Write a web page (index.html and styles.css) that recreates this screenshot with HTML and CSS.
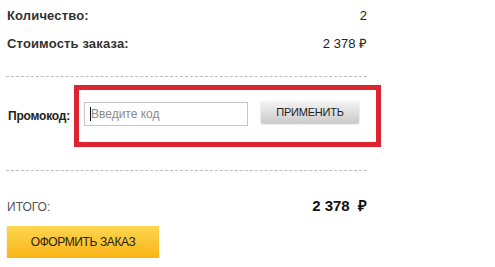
FILE: index.html
```html
<!DOCTYPE html>
<html>
    <head>
        <meta charset="utf-8">
        <title>Корзина</title>
        <link rel="stylesheet" href="styles.css">
    </head>
    <body>
        <div class="summary">
            <div class="row">
                <span class="label">Количество:</span>
                <span class="value">2</span>
            </div>
            <div class="row second">
                <span class="label">Стоимость заказа:</span>
                <span class="value">2 378 ₽</span>
            </div>

            <div class="divider"></div>

            <div class="promo">
                <span class="promoLabel">Промокод:</span>
                <div class="promoBox">
                    <span class="inputWrap">
                        <input type="text" class="promoInput" placeholder="Введите код" />
                        <span class="caret"></span>
                    </span>
                    <button type="button" class="btnApply">ПРИМЕНИТЬ</button>
                </div>
            </div>

            <div class="divider lower"></div>

            <div class="total">
                <span class="totalLabel">ИТОГО:</span>
                <span class="totalValue">2 378&nbsp; ₽</span>
            </div>

            <button type="button" class="btnOrder">ОФОРМИТЬ ЗАКАЗ</button>
        </div>
    </body>
</html>
```

FILE: styles.css
```css
body{
    margin: 0;
    background: #fff;
    font-family: "Liberation Sans", Arial, sans-serif;
    color: #222;
}

.summary{
    width: 361px;
    margin-left: 6px;
    padding-top: 8px;
}

.row{
    display: flex;
    justify-content: space-between;
    font-size: 13px;
    line-height: 16px;
}

.row.second{
    margin-top: 12px;
}

.label{
    font-weight: bold;
    color: #333;
    padding-left: 1px;
    letter-spacing: 0.15px;
}

.value{
    color: #222;
}

.divider{
    border-top: 1px dashed #bdbdbd;
    margin-top: 24px;
}

.divider.lower{
    margin-top: 23px;
}

.promo{
    display: flex;
    align-items: center;
    margin-top: 8px;
}

.promoLabel{
    width: 66px;
    padding-left: 2px;
    font-size: 12px;
    font-weight: bold;
    letter-spacing: -0.2px;
    color: #222;
    flex: none;
}

.promoBox{
    display: flex;
    align-items: flex-start;
    gap: 13px;
    border: 5px solid #dc2430;
    padding: 11px 17px 16px 5px;
    flex: none;
}

.inputWrap{
    position: relative;
    display: block;
    margin-top: 1px;
}

.promoInput{
    display: block;
    box-sizing: border-box;
    width: 164px;
    height: 24px;
    margin: 0;
    border: 1px solid #c8c8c8;
    padding: 0 0 0 6px;
    font-family: "Liberation Sans", Arial, sans-serif;
    font-size: 12px;
    color: #333;
    outline: none;
}

.promoInput::placeholder{
    color: #8a8a8a;
}

.caret{
    position: absolute;
    left: 6px;
    top: 5px;
    width: 1px;
    height: 14px;
    background: #111;
}

.btnApply{
    box-sizing: border-box;
    width: 98px;
    height: 22px;
    margin: 0;
    border: none;
    border-radius: 1px;
    background: linear-gradient(#f4f4f4, #cbcbcb);
    box-shadow: 0 1px 2px rgba(0, 0, 0, 0.25);
    font-family: "Liberation Sans", Arial, sans-serif;
    font-size: 11px;
    letter-spacing: -0.2px;
    color: #222;
    padding: 0;
}

.total{
    display: flex;
    justify-content: space-between;
    align-items: baseline;
    margin-top: 25px;
    line-height: 20px;
}

.totalLabel{
    font-size: 12px;
    color: #555;
    padding-left: 1px;
}

.totalValue{
    font-size: 15px;
    font-weight: bold;
    color: #111;
}

.btnOrder{
    display: block;
    box-sizing: border-box;
    width: 152px;
    height: 32px;
    margin: 9px 0 0 1px;
    border: none;
    background: linear-gradient(#fdd650, #fab416);
    box-shadow: 0 1px 1px rgba(200, 120, 0, 0.5);
    font-family: "Liberation Sans", Arial, sans-serif;
    font-size: 12px;
    letter-spacing: -0.4px;
    color: #2a2010;
    padding: 0;
}
```
